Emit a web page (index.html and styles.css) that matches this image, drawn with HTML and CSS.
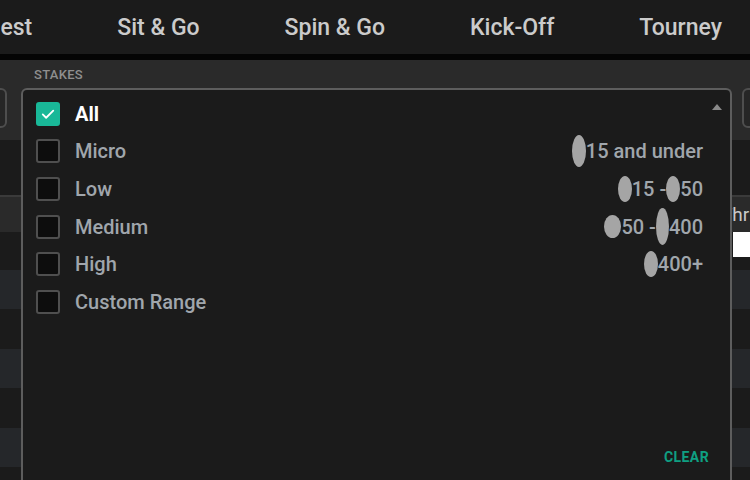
FILE: index.html
```html
<!DOCTYPE html>
<html lang="en">
<head>
    <meta charset="UTF-8">
    <title>Lobby - Stakes filter</title>
    <link rel="stylesheet" href="styles.css">
</head>
<body>
    <nav class="tabs">
        <a class="tab">Best</a>
        <a class="tab">Sit &amp; Go</a>
        <a class="tab">Spin &amp; Go</a>
        <a class="tab">Kick-Off</a>
        <a class="tab">Tourney</a>
    </nav>
    <div class="divider"></div>

    <div class="filters">
        <div class="stub stub-left"></div>
        <div class="field">
            <label class="field-label">Stakes</label>
            <div class="dropdown">
                <span class="caret"></span>
                <ul class="options">
                    <li class="option checked">
                        <span class="box">
                            <svg viewBox="0 0 24 24" width="18" height="18"><path d="M5 12.5l4.5 4.5L19 7.5" fill="none" stroke="#fff" stroke-width="2.4" stroke-linecap="round" stroke-linejoin="round"/></svg>
                        </span>
                        <span class="name">All</span>
                    </li>
                    <li class="option">
                        <span class="box"></span>
                        <span class="name">Micro</span>
                        <span class="range"><i class="blur blur-tall"></i>15 and under</span>
                    </li>
                    <li class="option">
                        <span class="box"></span>
                        <span class="name">Low</span>
                        <span class="range"><i class="blur"></i>15 - <i class="blur"></i>50</span>
                    </li>
                    <li class="option">
                        <span class="box"></span>
                        <span class="name">Medium</span>
                        <span class="range"><i class="blur blur-round"></i>50 - <i class="blur blur-long"></i>400</span>
                    </li>
                    <li class="option">
                        <span class="box"></span>
                        <span class="name">High</span>
                        <span class="range"><i class="blur"></i>400+</span>
                    </li>
                    <li class="option">
                        <span class="box"></span>
                        <span class="name">Custom Range</span>
                    </li>
                </ul>
                <div class="dropdown-footer">
                    <a class="clear">Clear</a>
                </div>
            </div>
        </div>
        <div class="stub stub-right"></div>
    </div>

    <div class="table">
        <div class="row row-top"></div>
        <div class="row row-head"><span class="head-text">Thr</span></div>
        <div class="row row-search"><span class="search"></span></div>
        <div class="row alt"></div>
        <div class="row"></div>
        <div class="row alt"></div>
        <div class="row"></div>
        <div class="row alt"></div>
        <div class="row"></div>
    </div>
</body>
</html>
```

FILE: styles.css
```css
body {
    margin: 0;
    width: 750px;
    height: 480px;
    overflow: hidden;
    display: flex;
    flex-direction: column;
    background-color: #1b1b1b;
    font-family: Roboto, "Liberation Sans", sans-serif;
}
.tabs {
    flex-shrink: 0;
    height: 54px;
    display: flex;
    justify-content: flex-end;
    align-items: center;
    gap: 85px;
    padding-right: 28px;
    overflow: hidden;
    background-color: #1b1b1b;
}
.tab {
    flex-shrink: 0;
    color: #cbcbcb;
    font-size: 23px;
    font-weight: 500;
    white-space: nowrap;
}
.divider {
    flex-shrink: 0;
    height: 6px;
    background-color: #040404;
}
.filters {
    flex-shrink: 0;
    height: 80px;
    display: flex;
    background-color: #2a2a2a;
    position: relative;
    z-index: 2;
}
.stub {
    flex-shrink: 0;
    margin-top: 28px;
    height: 36px;
    width: 20px;
    border: 2px solid #4e4e4e;
    border-radius: 6px;
    background-color: #262626;
}
.stub-left {
    margin-left: -17px;
    margin-right: 14px;
}
.stub-right {
    margin-left: 10px;
}
.field {
    position: relative;
    flex-shrink: 0;
    width: 711px;
}
.field-label {
    display: block;
    padding: 7px 0 0 13px;
    height: 21px;
    color: #8f8f8f;
    font-size: 13px;
    font-weight: 500;
    letter-spacing: 0.3px;
    text-transform: uppercase;
}
/* open menu runs past the bottom of the window */
.dropdown {
    position: absolute;
    top: 28px;
    left: 0;
    right: 0;
    height: 392px;
    display: flex;
    flex-direction: column;
    border: 2px solid #5d5d5d;
    border-bottom: 0;
    border-radius: 6px 6px 0 0;
    background-color: #1b1b1b;
}
.caret {
    position: absolute;
    top: 14px;
    right: 8px;
    border-left: 5px solid transparent;
    border-right: 5px solid transparent;
    border-bottom: 6px solid #8a8a8a;
}
.options {
    list-style: none;
    margin: 0;
    padding: 5px 27px 0 13px;
}
.option {
    height: 37.6px;
    display: flex;
    align-items: center;
    gap: 15px;
    color: #a0a6ac;
    font-size: 20px;
    font-weight: 500;
}
.box {
    width: 20px;
    height: 20px;
    display: flex;
    align-items: center;
    justify-content: center;
    border: 2px solid #4f4f4f;
    border-radius: 3px;
    background-color: #0d0d0d;
}
.option.checked .box {
    border-color: #19b898;
    background-color: #19b898;
}
.option.checked .name {
    color: #ffffff;
    font-weight: 700;
}
.range {
    margin-left: auto;
    display: flex;
    align-items: center;
}
.blur {
    display: inline-block;
    width: 14px;
    height: 26px;
    border-radius: 50%;
    background-color: #a5a5a5;
}
.blur-tall {
    height: 32px;
}
.blur-round {
    width: 17px;
    height: 23px;
}
.blur-long {
    width: 13px;
    height: 37px;
}
.dropdown-footer {
    margin-top: auto;
    padding: 0 21px 16px 0;
    text-align: right;
}
.clear {
    color: #0f9f82;
    font-size: 14px;
    font-weight: 700;
    letter-spacing: 0.4px;
    text-transform: uppercase;
}
.table {
    flex: 1;
    min-height: 0;
    overflow: hidden;
    display: flex;
    flex-direction: column;
}
.row {
    flex-shrink: 0;
    height: 39.4px;
    background-color: #1b1b1b;
}
.row.alt {
    background-color: #25272a;
}
.row-top {
    height: 55px;
}
.row-head {
    height: 35px;
    border-top: 2px solid #3a3a3a;
    background-color: #2a2a2a;
    display: flex;
    align-items: center;
    overflow: hidden;
}
.head-text {
    margin-left: 721px;
    color: #c9c9c9;
    font-size: 19px;
    white-space: nowrap;
}
.row-search {
    height: 38px;
    display: flex;
    justify-content: flex-end;
}
.search {
    width: 17px;
    height: 25px;
    background-color: #ffffff;
}
```
